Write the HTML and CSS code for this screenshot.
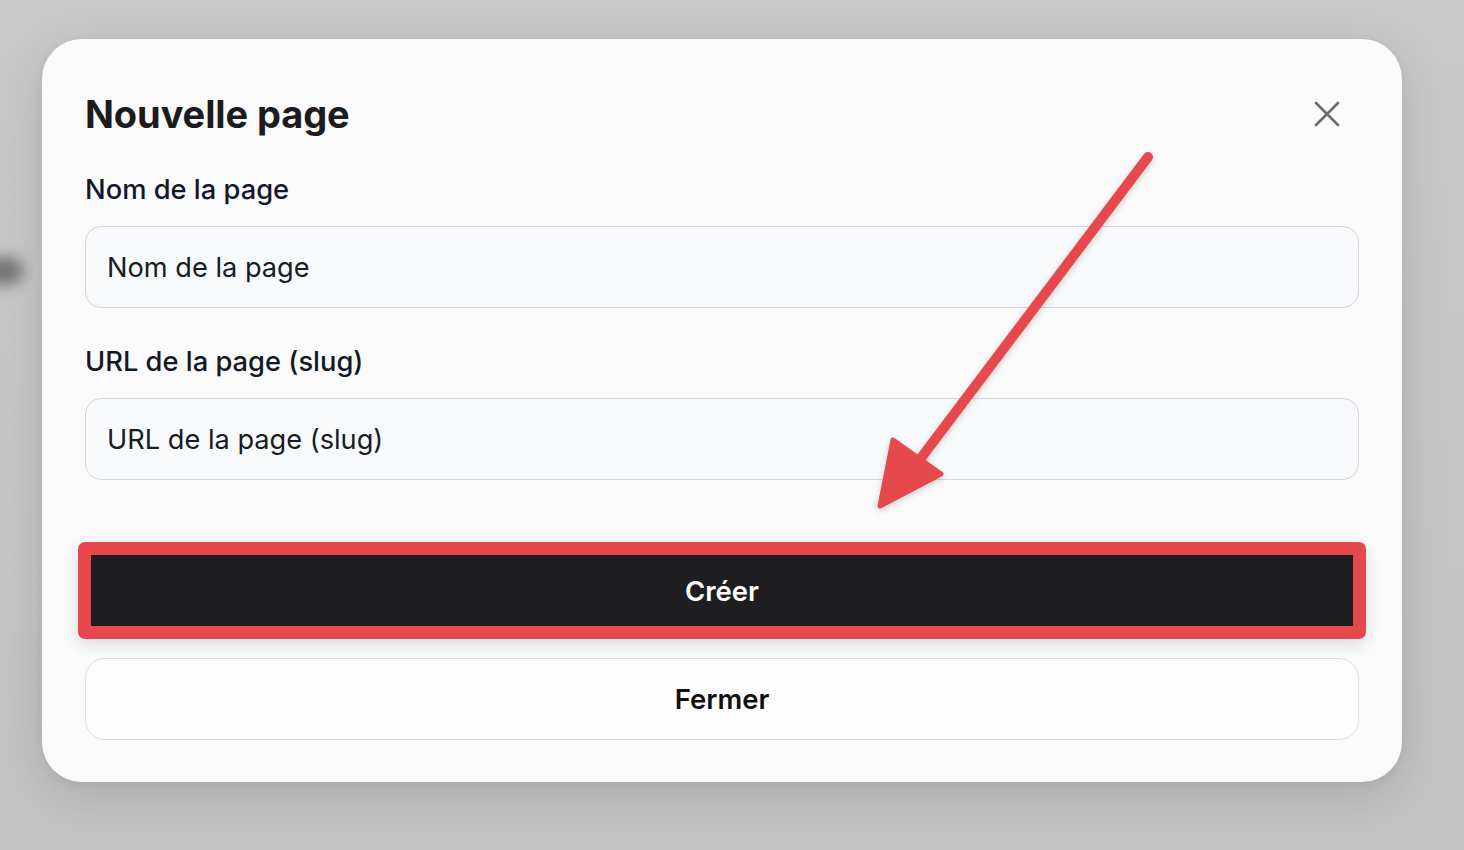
FILE: index.html
```html
<!DOCTYPE html>
<html lang="fr">
<head>
<meta charset="utf-8">
<title>Nouvelle page</title>
<link rel="stylesheet" href="styles.css">
</head>
<body>
<div class="backdrop">
  <div class="blob"></div>
  <div class="modal">
    <div class="modal-header">
      <h1 class="modal-title">Nouvelle page</h1>
      <button class="close-btn" aria-label="Fermer">
        <svg width="26" height="26" viewBox="0 0 26 26"><path d="M2 2 L24 24 M24 2 L2 24" stroke="#6b6b6d" stroke-width="2.6" stroke-linecap="round" fill="none"/></svg>
      </button>
    </div>
    <div class="field">
      <label class="field-label">Nom de la page</label>
      <div class="field-input">Nom de la page</div>
    </div>
    <div class="field">
      <label class="field-label">URL de la page (slug)</label>
      <div class="field-input">URL de la page (slug)</div>
    </div>
    <div class="actions">
      <div class="primary-wrap">
        <button class="btn btn-primary">Créer</button>
        <div class="highlight"></div>
      </div>
      <button class="btn btn-secondary">Fermer</button>
    </div>
  </div>
  <svg class="annotation" width="1464" height="850" viewBox="0 0 1464 850">
    <defs>
      <filter id="sh" x="-20%" y="-20%" width="140%" height="140%">
        <feDropShadow dx="0" dy="2" stdDeviation="3" flood-color="#000" flood-opacity="0.18"/>
      </filter>
    </defs>
    <g filter="url(#sh)" fill="#e5484d" stroke="#e5484d" stroke-linejoin="round" stroke-linecap="round">
      <line x1="1148" y1="157" x2="912" y2="470" stroke-width="10"/>
      <polygon points="893,440 941,474 880,506" stroke-width="5"/>
    </g>
  </svg>
</div>
</body>
</html>
```
FILE: styles.css
```css
* { box-sizing: border-box; }
html, body { margin: 0; padding: 0; }
body {
  width: 1464px;
  height: 850px;
  overflow: hidden;
  font-family: Inter, "Liberation Sans", sans-serif;
  background: #c7c7c7;
}
.backdrop {
  position: relative;
  width: 1464px;
  height: 850px;
  padding: 39px 0 0 42px;
  background: linear-gradient(180deg, #c9c9c9 0%, #c3c3c3 100%);
}
.blob {
  position: absolute;
  left: -16px;
  top: 256px;
  width: 40px;
  height: 30px;
  border-radius: 50%;
  background: #777777;
  filter: blur(7px);
}
.modal {
  position: relative;
  width: 1360px;
  height: 743px;
  background: #fafafa;
  border-radius: 40px;
  padding: 52px 43px 42px 43px;
  display: flex;
  flex-direction: column;
  box-shadow: 0 14px 50px rgba(0,0,0,0.13), 0 2px 10px rgba(0,0,0,0.06);
}
.modal-header {
  display: flex;
  align-items: center;
  justify-content: space-between;
  height: 46px;
}
.modal-title {
  margin: 0;
  font-size: 38px;
  line-height: 46px;
  font-weight: 700;
  color: #1c1c1e;
  letter-spacing: -0.1px;
}
.close-btn {
  border: 0;
  background: transparent;
  padding: 0;
  width: 26px;
  height: 26px;
  margin-right: 19px;
  display: flex;
}
.field {
  display: flex;
  flex-direction: column;
  margin-top: 37px;
}
.field + .field { margin-top: 38px; }
.field-label {
  font-size: 27.3px;
  line-height: 32px;
  font-weight: 500;
  color: #121826;
}
.field-input {
  margin-top: 20px;
  height: 82px;
  border: 1.5px solid #d3d5db;
  border-radius: 16px;
  background: #f8f9fb;
  padding: 0 21px;
  display: flex;
  align-items: center;
  font-size: 27.2px;
  color: #161b26;
}
.actions {
  display: flex;
  flex-direction: column;
  gap: 25px;
  margin-top: 69px;
}
.primary-wrap { position: relative; }
.btn {
  width: 100%;
  height: 82px;
  border-radius: 18px;
  font-family: Inter, "Liberation Sans", sans-serif;
  font-size: 27.5px;
  font-weight: 600;
  display: flex;
  align-items: center;
  justify-content: center;
}
.btn-primary {
  height: 84px;
  background: #1e1e20;
  color: #ffffff;
  border: 0;
}
.btn-secondary {
  background: #fdfdfd;
  color: #111111;
  border: 1.5px solid #dedede;
  border-radius: 20px;
}
.highlight {
  position: absolute;
  left: -7px;
  right: -7px;
  top: -7px;
  bottom: -6px;
  border: 13px solid #e5484d;
  border-radius: 7px;
  box-shadow: 0 6px 16px rgba(0,0,0,0.12);
}
.annotation {
  position: absolute;
  left: 0;
  top: 0;
  pointer-events: none;
}
```
